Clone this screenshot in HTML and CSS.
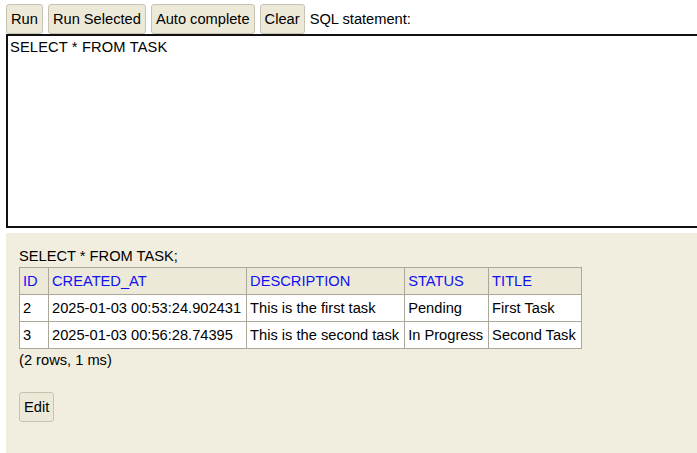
FILE: index.html
```html
<!DOCTYPE html>
<html>
<head>
<meta charset="utf-8">
<link rel="stylesheet" href="styles.css">
</head>
<body>
<div class="query">
  <div class="toolbar">
    <button class="btn">Run</button>
    <button class="btn">Run Selected</button>
    <button class="btn">Auto complete</button>
    <button class="btn">Clear</button>
    <span class="label">SQL statement:</span>
  </div>
  <textarea class="sql">SELECT * FROM TASK</textarea>
</div>
<div class="result">
  <div class="stmt">SELECT * FROM TASK;</div>
  <table class="grid">
    <tr>
      <th class="col-id"><a href="#">ID</a></th>
      <th><a href="#">CREATED_AT</a></th>
      <th><a href="#">DESCRIPTION</a></th>
      <th><a href="#">STATUS</a></th>
      <th><a href="#">TITLE</a></th>
    </tr>
    <tr>
      <td>2</td>
      <td>2025-01-03 00:53:24.902431</td>
      <td>This is the first task</td>
      <td>Pending</td>
      <td>First Task</td>
    </tr>
    <tr>
      <td>3</td>
      <td>2025-01-03 00:56:28.74395</td>
      <td>This is the second task</td>
      <td>In Progress</td>
      <td>Second Task</td>
    </tr>
  </table>
  <div class="info">(2 rows, 1 ms)</div>
  <div class="actions">
    <button class="btn">Edit</button>
  </div>
</div>
</body>
</html>
```

FILE: styles.css
```css
html, body {
  margin: 0;
  padding: 0;
  overflow: hidden;
  height: 100%;
  background: #ffffff;
}
body {
  font-family: "Liberation Sans", Arial, sans-serif;
  font-size: 14.67px;
  line-height: 1.5;
  color: #000;
  display: flex;
  flex-direction: column;
}
.query {
  padding: 4px 0 0 6px;
}
.toolbar {
  display: flex;
  align-items: center;
  gap: 5px;
  white-space: nowrap;
}
.btn {
  font-family: "Liberation Sans", Arial, sans-serif;
  font-size: 14.67px;
  line-height: 22px;
  padding: 3px 4px;
  margin: 0;
  border: 1px solid #c6c3b3;
  border-radius: 3px;
  background: #ece9d8;
  color: #000;
}
.label {
  margin-left: 0;
}
.sql {
  display: block;
  box-sizing: border-box;
  width: 720px;
  height: 194px;
  margin: 0;
  border: 2px solid #111;
  padding: 2px 2px;
  font-family: "Liberation Sans", Arial, sans-serif;
  font-size: 14.67px;
  line-height: 18px;
  letter-spacing: 0.15px;
  resize: none;
  outline: none;
  background: #fff;
}
.result {
  flex: 1;
  margin: 5px 0 0 6px;
  padding: 12px 13px;
  background: #f1eee0;
}
.stmt {
  height: 22px;
}
.grid {
  border-collapse: collapse;
}
.grid th, .grid td {
  border: 1px solid #aca899;
  padding: 2px 5px 2px 3px;
  text-align: left;
  font-weight: normal;
  white-space: nowrap;
}
.grid th {
  background: #ece9d8;
}
.grid td {
  background: #ffffff;
}
.grid th a {
  color: #1010f0;
  text-decoration: none;
}
.col-id {
  min-width: 20px;
}
.info {
  height: 22px;
}
.actions {
  margin-top: 21px;
}
```
